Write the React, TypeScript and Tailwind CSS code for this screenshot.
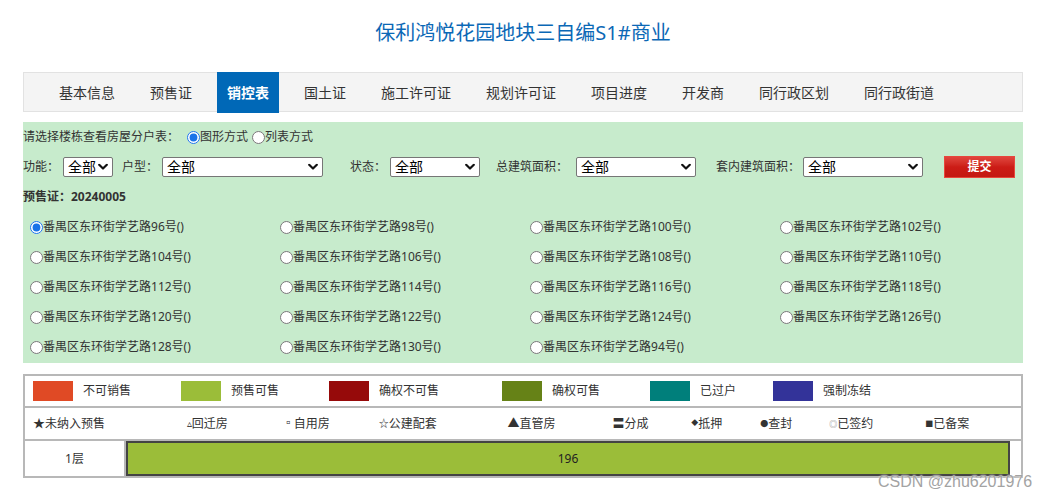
import { useState } from "react";

const tabs = ["基本信息", "预售证", "销控表", "国土证", "施工许可证", "规划许可证", "项目进度", "开发商", "同行政区划", "同行政街道"];

const buildings = [
  "96", "98", "100", "102",
  "104", "106", "108", "110",
  "112", "114", "116", "118",
  "120", "122", "124", "126",
  "128", "130", "94",
];

const legend = [
  { label: "不可销售", color: "bg-[#e04a25]", w: "w-[148px]" },
  { label: "预售可售", color: "bg-[#9bbd39]", w: "w-[148px]" },
  { label: "确权不可售", color: "bg-[#960a0a]", w: "w-[173px]" },
  { label: "确权可售", color: "bg-[#668217]", w: "w-[148px]" },
  { label: "已过户", color: "bg-[#007f7b]", w: "w-[123px]" },
  { label: "强制冻结", color: "bg-[#333399]", w: "w-[148px]" },
];

const marks = [
  { sym: "★", cls: "text-[12px]", label: "未纳入预售", w: "w-[154px]" },
  { sym: "▵", cls: "text-[10px] text-[#222]", label: "回迁房", w: "w-[96px]" },
  { sym: "▫", cls: "text-[11px] text-[#222]", label: "自用房", w: "w-[96px]" },
  { sym: "☆", cls: "text-[10px]", label: "公建配套", w: "w-[129px]" },
  { sym: "▲", cls: "text-[12px]", label: "直管房", w: "w-[105px]" },
  { sym: "〓", cls: "text-[12px] font-bold", label: "分成", w: "w-[79px]" },
  { sym: "◆", cls: "text-[7px]", label: "抵押", w: "w-[69px]" },
  { sym: "●", cls: "text-[8px]", label: "查封", w: "w-[69px]" },
  { sym: "◎", cls: "text-[8px] text-[#888]", label: "已签约", w: "w-[96px]" },
  { sym: "■", cls: "text-[8px]", label: "已备案", w: "w-[96px]" },
];

function Chevron() {
  return (
    <svg className="pointer-events-none absolute right-[5px] top-1/2 -translate-y-1/2" width="10" height="7" viewBox="0 0 10 7">
      <path d="M1.2 1.3 L5 5 L8.8 1.3" fill="none" stroke="#111" strokeWidth="2.2" strokeLinecap="round" strokeLinejoin="round" />
    </svg>
  );
}

function Select({ w }: { w: string }) {
  return (
    <div className={`relative h-[20px] ${w}`}>
      <select className="h-full w-full appearance-none rounded-[2px] border border-[#767676] bg-white pl-[4px] text-[14px] leading-[18px] text-black outline-none">
        <option>全部</option>
      </select>
      <Chevron />
    </div>
  );
}

export default function App() {
  const [building, setBuilding] = useState("96");
  const [mode, setMode] = useState("graph");

  return (
    <div className="relative min-h-[497px] bg-white font-['Noto_Sans','Noto_Sans_CJK_SC',sans-serif] text-[#333]">
      <div className="ml-[23px] w-[1000px]">
        {/* title */}
        <div className="flex h-[66px] items-center justify-center text-[20px] text-[#0b68b6]">
          保利鸿悦花园地块三自编S1#商业
        </div>

        {/* tabs */}
        <div className="mt-[6px] flex h-[40px] border border-[#e2e2e2] bg-[#f4f4f4] pl-[25px]">
          {tabs.map((t) => (
            <div
              key={t}
              className={
                t === "销控表"
                  ? "-mt-px mr-[15px] flex h-[41px] items-center bg-[#0068b7] px-[10px] text-[14px] font-bold text-white"
                  : "mr-[15px] flex h-[39px] items-center px-[10px] text-[14px] text-[#333]"
              }
            >
              {t}
            </div>
          ))}
        </div>

        {/* filter panel */}
        <div className="mt-[10px] bg-[#c7ebcc] pb-[1px] text-[12px]">
          <div className="flex h-[30px] items-center">
            <span>请选择楼栋查看房屋分户表：</span>
            <input
              type="radio"
              checked={mode === "graph"}
              onChange={() => setMode("graph")}
              className="m-0 ml-[8px] h-[13px] w-[13px] accent-[#1a73e8]"
            />
            <span>图形方式</span>
            <input
              type="radio"
              checked={mode === "list"}
              onChange={() => setMode("list")}
              className="m-0 ml-[4px] h-[13px] w-[13px] accent-[#1a73e8]"
            />
            <span>列表方式</span>
          </div>

          <div className="flex h-[30px] items-center">
            <span className="w-[40px]">功能：</span>
            <Select w="w-[50px]" />
            <span className="ml-[9px] w-[40px]">户型：</span>
            <Select w="w-[161px]" />
            <span className="ml-[27px] w-[40px]">状态：</span>
            <Select w="w-[90px]" />
            <span className="ml-[16px] w-[80px]">总建筑面积：</span>
            <Select w="w-[120px]" />
            <span className="ml-[20px] w-[87px]">套内建筑面积：</span>
            <Select w="w-[120px]" />
            <button className="ml-[21px] h-[22px] w-[71px] border border-[#e8463c] bg-gradient-to-b from-[#e0443c] via-[#cc1c16] to-[#c41812] text-[12px] font-bold text-white">
              提交
            </button>
          </div>

          <div className="flex h-[30px] items-center font-bold">预售证：20240005</div>

          <div className="grid grid-cols-4">
            {buildings.map((b) => (
              <label key={b} className="flex h-[30px] items-center pl-[7px]">
                <input
                  type="radio"
                  name="bld"
                  checked={building === b}
                  onChange={() => setBuilding(b)}
                  className="m-0 h-[13px] w-[13px] accent-[#1a73e8]"
                />
                <span>番禺区东环街学艺路{b}号()</span>
              </label>
            ))}
          </div>
        </div>

        {/* legend table */}
        <div className="mt-[11px] border-2 border-[#b8b8b8] text-[12px]">
          <div className="flex h-[30px] items-center pl-[8px]">
            {legend.map((l) => (
              <div key={l.label} className={`flex items-center ${l.w}`}>
                <span className={`h-[20px] w-[40px] ${l.color}`} />
                <span className="ml-[10px]">{l.label}</span>
              </div>
            ))}
          </div>
          <div className="flex h-[33px] items-center border-t-2 border-[#b8b8b8] pl-[8px]">
            {marks.map((m) => (
              <div key={m.label} className={`flex items-center ${m.w}`}>
                <span className={m.cls}>{m.sym}</span>
                <span>{m.label}</span>
              </div>
            ))}
          </div>
          <div className="flex h-[37px] border-t-2 border-[#b8b8b8]">
            <div className="flex w-[101px] items-center justify-center border-r-2 border-[#b8b8b8] text-[#333]">1层</div>
            <div className="flex w-[884px] items-center justify-center border-2 border-[#444] bg-[#9bbd39] text-[#222]">
              196
            </div>
          </div>
        </div>
      </div>

      {/* watermark */}
      <div className="absolute left-[878px] top-[470px] font-['Liberation_Sans',sans-serif] text-[16px] text-[#a3a3a3] [text-shadow:0_0_2px_#fff]">
        CSDN @zhu6201976
      </div>
    </div>
  );
}
